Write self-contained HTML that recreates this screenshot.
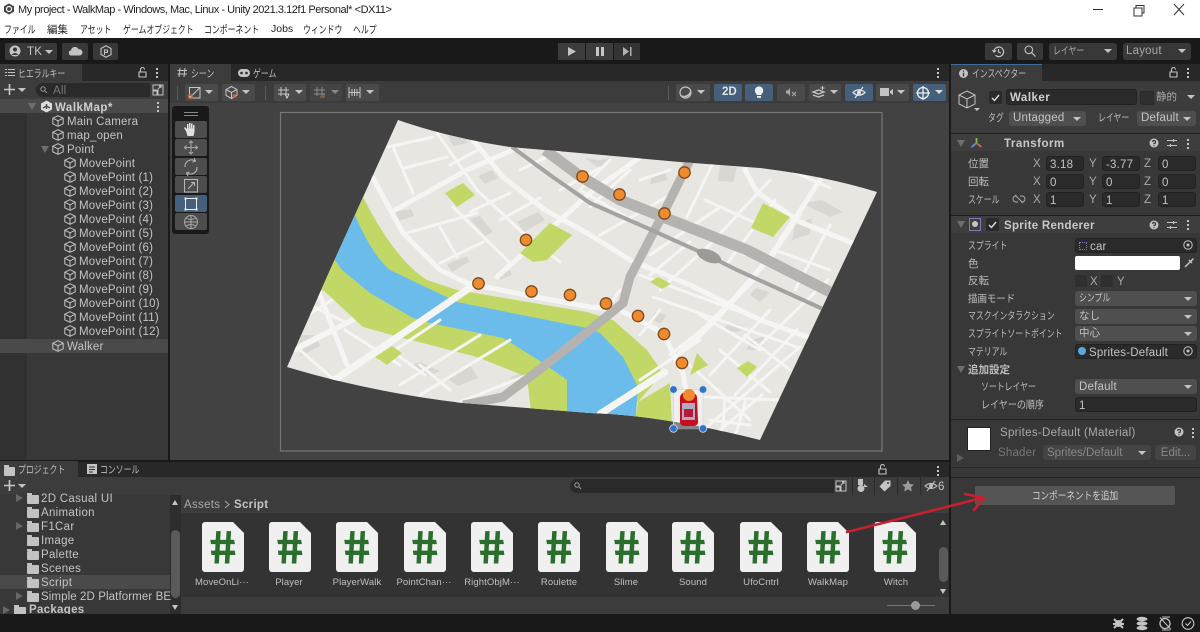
<!DOCTYPE html>
<html lang="ja"><head><meta charset="utf-8"><title>Unity</title>
<style>
html,body{margin:0;padding:0;width:1200px;height:632px;overflow:hidden;background:#191919}
body{position:relative;font-family:"Liberation Sans","Noto Sans CJK JP",sans-serif;font-size:11px;color:#c4c4c4}
.b{position:absolute}
.t{position:absolute;white-space:nowrap;height:14px;line-height:14px;font-size:11.5px;letter-spacing:.2px;margin-top:2px}
.j{font-size:10.5px;letter-spacing:0;color:#bdbdbd;transform:scaleX(.75);transform-origin:0 50%}
.k{font-size:10.5px;letter-spacing:0;color:#bdbdbd}
.m{font-size:10.5px;letter-spacing:0;color:#bdbdbd;transform:scaleX(.9);transform-origin:0 50%}
.menu{color:#222;margin-top:1px}
.btn{position:absolute;background:#4a4a4a;border-radius:2px}
.blue{background:#46607c}
.dd{position:absolute;background:#4f4f4f;border-radius:3px;height:15px;line-height:16px;padding-left:4px;box-sizing:border-box;color:#c4c4c4;white-space:nowrap;font-size:11.5px;letter-spacing:.2px}
.dd:after,.ar{content:"";position:absolute;right:5px;top:6px;width:0;height:0;border-left:4px solid transparent;border-right:4px solid transparent;border-top:4px solid #c4c4c4}
.ar{right:auto}
.sj{display:inline-block;font-size:10.5px;letter-spacing:0;transform:scaleX(.75);transform-origin:0 50%}
.f{position:absolute;background:#2a2a2a;border-radius:3px;height:15px;line-height:16px;padding-left:3px;box-sizing:border-box;color:#c4c4c4;font-size:11.5px;letter-spacing:.2px;white-space:nowrap;border:1px solid #222}
.tri{position:absolute;width:0;height:0;border-left:4px solid transparent;border-right:4px solid transparent;border-top:7px solid #6e6e6e}
.tr{position:absolute;width:0;height:0;border-top:4px solid transparent;border-bottom:4px solid transparent;border-left:7px solid #6e6e6e}
.cube{position:absolute;width:12px;height:12px}
.fold{position:absolute;width:12px;height:9px;background:#c2c2c2;border-radius:1px}
.fold:before{content:"";position:absolute;left:0;top:-2px;width:5px;height:2px;background:#c2c2c2}
.doc{position:absolute;top:522px;width:42px;height:50px;background:#f0f0f0;border-radius:3px;clip-path:polygon(0 0,31px 0,42px 11px,42px 50px,0 50px);color:#2b6e2d;font-family:"Liberation Sans",sans-serif;font-weight:bold;font-size:46px;line-height:50px;text-align:center}
.doc span{display:inline-block;transform:skewX(9deg);-webkit-text-stroke:1px #2b6e2d}
.lb{position:absolute;top:576px;width:70px;text-align:center;height:14px;line-height:14px;font-size:9.5px;color:#c0c0c0;letter-spacing:.1px;white-space:nowrap}
.dots{position:absolute;width:2px;height:2px;background:#c4c4c4;box-shadow:0 4px 0 #c4c4c4,0 8px 0 #c4c4c4}
.tool{position:absolute;left:175px;width:32px;height:17px;background:#4d4d4d;border-radius:2px}
svg{position:absolute;overflow:visible}
</style></head><body>
<svg width="0" height="0" style="position:absolute"><defs>
<symbol id="c" viewBox="0 0 12 12"><path d="M6 .7 11.2 3.2V8.8L6 11.3.8 8.8V3.2ZM.8 3.2 6 5.8 11.2 3.2M6 5.8V11.3" fill="none" stroke="#c4c4c4" stroke-width="1"/></symbol>
</defs></svg>

<!-- title bar -->
<div class="b" style="left:0;top:0;width:1200px;height:38px;background:#fff"></div>
<svg style="left:3px;top:3px" width="12" height="12" viewBox="0 0 12 12"><path d="M6 .5 11 3.2V8.8L6 11.5 1 8.8V3.2Z" fill="#444"/><circle cx="6" cy="6" r="2.5" fill="none" stroke="#fff" stroke-width="1.2"/></svg>
<div class="t" style="left:18px;top:2px;color:#222;font-size:11px;letter-spacing:-.45px;margin-top:1px">My project - WalkMap - Windows, Mac, Linux - Unity 2021.3.12f1 Personal* &lt;DX11&gt;</div>
<div class="t j menu" style="left:4px;top:22px">ファイル</div>
<div class="t k menu" style="left:47px;top:22px">編集</div>
<div class="t j menu" style="left:80px;top:22px">アセット</div>
<div class="t j menu" style="left:123px;top:22px">ゲームオブジェクト</div>
<div class="t j menu" style="left:204px;top:22px">コンポーネント</div>
<div class="t menu" style="left:271px;top:21px;font-size:10.5px;letter-spacing:0">Jobs</div>
<div class="t j menu" style="left:303px;top:22px">ウィンドウ</div>
<div class="t j menu" style="left:353px;top:22px">ヘルプ</div>
<svg style="left:1090px;top:3px" width="100" height="14" viewBox="0 0 100 14"><path d="M3 6.5H13" stroke="#333" stroke-width="1"/><path d="M44 5H52V13H44ZM46 5V2.5H54V10H52" fill="none" stroke="#333" stroke-width="1"/><path d="M84 1 94 12M94 1 84 12" stroke="#333" stroke-width="1"/></svg>

<!-- main toolbar -->
<div class="b" style="left:0;top:38px;width:1200px;height:26px;background:#191919"></div>
<div class="btn" style="left:5px;top:43px;width:52px;height:17px;background:#383838"></div>
<svg style="left:9px;top:45px" width="12" height="12" viewBox="0 0 12 12"><circle cx="6" cy="6" r="5.5" fill="#c4c4c4"/><circle cx="6" cy="4.5" r="2" fill="#383838"/><path d="M2.5 10Q6 6 9.5 10" fill="#383838"/></svg>
<div class="t" style="left:27px;top:43px">TK</div>
<div class="ar" style="left:45px;top:50px"></div>
<div class="btn" style="left:62px;top:43px;width:26px;height:17px;background:#383838"></div>
<svg style="left:68px;top:46px" width="15" height="10" viewBox="0 0 15 10"><path d="M3 9.5A2.7 2.7 0 0 1 3 4.2 4 4 0 0 1 10.5 3.2 3.2 3.2 0 0 1 12 9.5Z" fill="#c4c4c4"/></svg>
<div class="btn" style="left:93px;top:43px;width:25px;height:17px;background:#383838"></div>
<svg style="left:100px;top:45px" width="12" height="13" viewBox="0 0 12 13"><path d="M6 .8 11 3.5V9.5L6 12.2 1 9.5V3.5Z" fill="none" stroke="#c4c4c4" stroke-width="1.1"/><path d="M4.5 10V5H7.5V7.5H4.5" fill="none" stroke="#c4c4c4" stroke-width="1.1"/></svg>
<div class="b" style="left:558px;top:43px;width:27px;height:17px;background:#3c3c3c"></div>
<div class="b" style="left:586px;top:43px;width:27px;height:17px;background:#3c3c3c"></div>
<div class="b" style="left:614px;top:43px;width:26px;height:17px;background:#333"></div>
<svg style="left:558px;top:43px" width="82" height="17" viewBox="0 0 82 17"><path d="M10 4 18 8.5 10 13Z" fill="#c4c4c4"/><path d="M38 4H41V13H38ZM43 4H46V13H43Z" fill="#c4c4c4"/><path d="M65 4 71 8.5 65 13ZM72 4H73.5V13H72Z" fill="#b0b0b0"/></svg>
<div class="btn" style="left:985px;top:43px;width:27px;height:17px;background:#383838"></div>
<svg style="left:992px;top:45px" width="13" height="13" viewBox="0 0 13 13"><path d="M2 6.5A4.8 4.8 0 1 1 3.5 10.3M.5 5 2 7 4 5.5M6.5 4V7L9 8" fill="none" stroke="#c4c4c4" stroke-width="1.2"/></svg>
<div class="btn" style="left:1017px;top:43px;width:26px;height:17px;background:#383838"></div>
<svg style="left:1024px;top:45px" width="12" height="12" viewBox="0 0 12 12"><circle cx="4.8" cy="4.8" r="3.8" fill="none" stroke="#c4c4c4" stroke-width="1.1"/><path d="M7.6 7.6 11.5 11.5" stroke="#c4c4c4" stroke-width="1.2"/></svg>
<div class="dd" style="left:1049px;top:43px;width:68px;height:17px;line-height:17px;background:#383838;color:#a8a8a8"><span class="sj">レイヤー</span></div>
<div class="dd" style="left:1123px;top:43px;width:68px;height:17px;line-height:17px;background:#383838;color:#a8a8a8;padding-left:3px">Layout</div>

<!-- hierarchy -->
<div class="b" style="left:0;top:64px;width:168px;height:17px;background:#282828"></div>
<div class="b" style="left:0;top:64px;width:82px;height:17px;background:#3c3c3c"></div>
<div class="b" style="left:0;top:81px;width:168px;height:18px;background:#3c3c3c"></div>
<div class="b" style="left:0;top:99px;width:168px;height:361px;background:#383838"></div>
<div class="b" style="left:0;top:113px;width:27px;height:347px;background:#313131"></div>
<div class="b" style="left:0;top:99px;width:168px;height:14px;background:#4a4a4a"></div>
<div class="b" style="left:0;top:339px;width:168px;height:14px;background:#4a4a4a"></div>
<svg style="left:5px;top:69px" width="10" height="8" viewBox="0 0 10 8"><path d="M0 .5H2M3 .5H10M0 3.5H2M3 3.5H10M0 6.5H2M3 6.5H10" stroke="#c4c4c4"/></svg>
<div class="t j" style="left:18px;top:65px">ヒエラルキー</div>
<svg style="left:138px;top:67px" width="9" height="11" viewBox="0 0 9 11"><path d="M2.5 4.5V2.5A2 2 0 0 1 6.5 2.5M1 5H8V10H1Z" fill="none" stroke="#c4c4c4" stroke-width="1.1"/></svg>
<div class="dots" style="left:156px;top:68px"></div>
<svg style="left:4px;top:84px" width="11" height="11" viewBox="0 0 11 11"><path d="M5.5 0V11M0 5.5H11" stroke="#c8c8c8" stroke-width="1.6"/></svg>
<div class="ar" style="left:18px;top:88px"></div>
<div class="b" style="left:36px;top:83px;width:114px;height:14px;background:#2a2a2a;border-radius:7px 2px 2px 7px"></div>
<svg style="left:40px;top:86px" width="9" height="8" viewBox="0 0 9 8"><circle cx="3" cy="3" r="2.2" fill="none" stroke="#999"/><path d="M5 5 7 7" stroke="#999"/></svg>
<div class="t" style="left:53px;top:82px;color:#777">All</div>
<svg style="left:152px;top:84px" width="12" height="12" viewBox="0 0 12 12"><path d="M1 1H11V11H6V6H1Z" fill="none" stroke="#c4c4c4"/><path d="M1 7H5V11H1ZM6 5 9 2M7 2H9V4" fill="none" stroke="#c4c4c4"/></svg>
<div class="tri" style="left:28px;top:103px"></div>
<svg style="left:40px;top:100px" width="13" height="13" viewBox="0 0 13 13"><path d="M6.5.5 12 3.5V9.5L6.5 12.5 1 9.5V3.5Z" fill="#dcdcdc"/><path d="M6.5 4V9M3 8 6.5 6 10 8" stroke="#4a4a4a" stroke-width="1.4" fill="none"/></svg>
<div class="t" style="left:55px;top:99px;font-weight:bold;color:#cfcfcf;letter-spacing:.5px">WalkMap*</div>
<div class="dots" style="left:157px;top:102px"></div>
<svg class="cube" style="left:52px;top:115px"><use href="#c"/></svg><div class="t" style="left:67px;top:113px">Main Camera</div>
<svg class="cube" style="left:52px;top:129px"><use href="#c"/></svg><div class="t" style="left:67px;top:127px">map_open</div>
<div class="tri" style="left:41px;top:146px"></div>
<svg class="cube" style="left:52px;top:143px"><use href="#c"/></svg><div class="t" style="left:67px;top:141px">Point</div>
<svg class="cube" style="left:64px;top:157px"><use href="#c"/></svg><div class="t" style="left:79px;top:155px">MovePoint</div>
<svg class="cube" style="left:64px;top:171px"><use href="#c"/></svg><div class="t" style="left:79px;top:169px">MovePoint (1)</div>
<svg class="cube" style="left:64px;top:185px"><use href="#c"/></svg><div class="t" style="left:79px;top:183px">MovePoint (2)</div>
<svg class="cube" style="left:64px;top:199px"><use href="#c"/></svg><div class="t" style="left:79px;top:197px">MovePoint (3)</div>
<svg class="cube" style="left:64px;top:213px"><use href="#c"/></svg><div class="t" style="left:79px;top:211px">MovePoint (4)</div>
<svg class="cube" style="left:64px;top:227px"><use href="#c"/></svg><div class="t" style="left:79px;top:225px">MovePoint (5)</div>
<svg class="cube" style="left:64px;top:241px"><use href="#c"/></svg><div class="t" style="left:79px;top:239px">MovePoint (6)</div>
<svg class="cube" style="left:64px;top:255px"><use href="#c"/></svg><div class="t" style="left:79px;top:253px">MovePoint (7)</div>
<svg class="cube" style="left:64px;top:269px"><use href="#c"/></svg><div class="t" style="left:79px;top:267px">MovePoint (8)</div>
<svg class="cube" style="left:64px;top:283px"><use href="#c"/></svg><div class="t" style="left:79px;top:281px">MovePoint (9)</div>
<svg class="cube" style="left:64px;top:297px"><use href="#c"/></svg><div class="t" style="left:79px;top:295px">MovePoint (10)</div>
<svg class="cube" style="left:64px;top:311px"><use href="#c"/></svg><div class="t" style="left:79px;top:309px">MovePoint (11)</div>
<svg class="cube" style="left:64px;top:325px"><use href="#c"/></svg><div class="t" style="left:79px;top:323px">MovePoint (12)</div>
<svg class="cube" style="left:52px;top:340px"><use href="#c"/></svg><div class="t" style="left:67px;top:338px">Walker</div>

<!-- scene -->
<div class="b" style="left:170px;top:64px;width:779px;height:17px;background:#282828"></div>
<div class="b" style="left:170px;top:64px;width:61px;height:17px;background:#3c3c3c"></div>
<div class="b" style="left:170px;top:81px;width:779px;height:22px;background:#3c3c3c"></div>
<div class="b" style="left:170px;top:103px;width:779px;height:357px;background:#424242"></div>
<svg style="left:177px;top:67px" width="11" height="11" viewBox="0 0 11 11"><path d="M3 1 2 10M8 1 7 10M.5 3.5H10M.5 7H10" stroke="#c4c4c4"/></svg>
<div class="t j" style="left:191px;top:65px">シーン</div>
<svg style="left:238px;top:69px" width="12" height="8" viewBox="0 0 12 8"><rect width="12" height="8" rx="4" fill="#c4c4c4"/><circle cx="3.5" cy="4" r="1.3" fill="#282828"/><circle cx="8.5" cy="4" r="1.3" fill="#282828"/></svg>
<div class="t j" style="left:253px;top:65px">ゲーム</div>
<div class="dots" style="left:937px;top:68px"></div>
<div class="b" style="left:177px;top:86px;width:1px;height:14px;background:#5a5a5a"></div>
<div class="btn" style="left:185px;top:84px;width:33px;height:17px"></div>
<svg style="left:188px;top:86px" width="13" height="13" viewBox="0 0 13 13"><path d="M1.5 1.5H12V12H1.5ZM1.5 12 12 1.5" fill="none" stroke="#c4c4c4"/><circle cx="2.5" cy="10.5" r="2" fill="none" stroke="#d0623c" stroke-width="1.2"/></svg>
<div class="ar" style="left:205px;top:90px"></div>
<div class="btn" style="left:222px;top:84px;width:33px;height:17px"></div>
<svg style="left:225px;top:86px" width="13" height="13" viewBox="0 0 13 13"><path d="M6.5 .5 12 3.5V9.5L6.5 12.5 1 9.5V3.5ZM1 3.5 6.5 6.5 12 3.5M6.5 6.5V12.5" fill="none" stroke="#c4c4c4"/><circle cx="9.5" cy="10" r="2" fill="#d0623c"/></svg>
<div class="ar" style="left:242px;top:90px"></div>
<div class="b" style="left:265px;top:86px;width:1px;height:14px;background:#5a5a5a"></div>
<div class="btn" style="left:274px;top:84px;width:32px;height:17px"></div>
<svg style="left:277px;top:86px" width="13" height="13" viewBox="0 0 13 13"><path d="M4 1V10M9 1V10M1 4H12M1 8H12" stroke="#c4c4c4"/><path d="M8 8 10 12 12 8" fill="none" stroke="#d0d0d0"/></svg>
<div class="ar" style="left:295px;top:90px"></div>
<div class="btn" style="left:310px;top:84px;width:32px;height:17px;background:#444"></div>
<svg style="left:313px;top:86px" width="13" height="13" viewBox="0 0 13 13"><path d="M4 1V10M9 1V10M1 4H12M1 8H12" stroke="#8a8a8a"/><path d="M7 11H11V7" fill="none" stroke="#c2693f"/></svg>
<div class="ar" style="left:331px;top:90px;border-top-color:#888"></div>
<div class="btn" style="left:346px;top:84px;width:33px;height:17px"></div>
<svg style="left:348px;top:86px" width="13" height="13" viewBox="0 0 13 13"><path d="M1 1V12M12 1V12M1 6.500H12M4 3V10M6.500 3V10M9 3V10" stroke="#c4c4c4"/></svg>
<div class="ar" style="left:366px;top:90px"></div>
<div class="b" style="left:668px;top:86px;width:1px;height:14px;background:#5a5a5a"></div>
<div class="btn" style="left:676px;top:84px;width:34px;height:17px"></div>
<svg style="left:679px;top:86px" width="13" height="13" viewBox="0 0 13 13"><circle cx="6.500" cy="6.500" r="5.500" fill="none" stroke="#c4c4c4" stroke-width="1.2"/><path d="M1.500 8.500A6 6 0 0 0 11 2.500 5 5 0 0 1 1.500 8.500Z" fill="#c4c4c4"/></svg>
<div class="ar" style="left:697px;top:90px"></div>
<div class="btn blue" style="left:714px;top:84px;width:28px;height:17px"></div>
<div class="t" style="left:722px;top:85px;font-weight:bold;color:#e4e4e4;letter-spacing:0;margin-top:0">2D</div>
<div class="btn blue" style="left:745px;top:84px;width:28px;height:17px"></div>
<svg style="left:754px;top:85px" width="10" height="14" viewBox="0 0 10 14"><path d="M2.500 9A4.200 4.200 0 1 1 7.500 9V10H2.500Z" fill="#eee"/><rect x="3" y="11" width="4" height="1.800" fill="#eee"/></svg>
<div class="btn" style="left:777px;top:84px;width:28px;height:17px"></div>
<svg style="left:785px;top:87px" width="12" height="11" viewBox="0 0 12 11"><path d="M1 3.500H3L5 1V9L3 6.500H1Z" fill="#aaa"/><path d="M7 5 11 9M11 5 7 9" stroke="#aaa"/></svg>
<div class="btn" style="left:809px;top:84px;width:32px;height:17px"></div>
<svg style="left:812px;top:86px" width="14" height="13" viewBox="0 0 14 13"><path d="M1 6 6.500 4 12 6 6.500 8ZM1 9 6.500 11 12 9" fill="none" stroke="#c4c4c4" stroke-width="1.300"/><path d="M10.500 0V4M8.500 2H12.500" stroke="#c4c4c4"/></svg>
<div class="ar" style="left:830px;top:90px"></div>
<div class="btn blue" style="left:845px;top:84px;width:28px;height:17px"></div>
<svg style="left:852px;top:86px" width="14" height="13" viewBox="0 0 14 13"><path d="M1 6.500Q7 1 13 6.500 7 12 1 6.500Z" fill="none" stroke="#e4e4e4" stroke-width="1.200"/><circle cx="7" cy="6.500" r="2" fill="#e4e4e4"/><path d="M3 12 11 1" stroke="#e4e4e4" stroke-width="1.200"/></svg>
<div class="btn" style="left:876px;top:84px;width:33px;height:17px"></div>
<svg style="left:880px;top:87px" width="14" height="10" viewBox="0 0 14 10"><rect y="1" width="9" height="8" fill="#c4c4c4"/><path d="M10 4 13 2V8L10 6Z" fill="#c4c4c4"/></svg>
<div class="ar" style="left:897px;top:90px"></div>
<div class="btn blue" style="left:913px;top:84px;width:33px;height:17px"></div>
<svg style="left:916px;top:86px" width="14" height="14" viewBox="0 0 14 14"><circle cx="7" cy="7" r="5.500" fill="none" stroke="#eee" stroke-width="1.300"/><path d="M7 0V14M0 7H14" stroke="#eee" stroke-width="1.300"/></svg>
<div class="ar" style="left:935px;top:90px;border-top-color:#ddd"></div>

<!-- map -->
<svg style="left:0;top:0" width="1200" height="632" viewBox="0 0 1200 632">
<rect x="280.500" y="112.500" width="601.500" height="338.500" fill="none" stroke="#777" stroke-width="1.200"/>
<defs><clipPath id="m"><path d="M398 120 Q450 138 510 147 L580 153 680 162 760 168 Q825 176 877 192 L840 270 760 440 Q660 415 590 413 L463 403 Q370 392 287 367 L330 270Z"/></clipPath></defs>
<g clip-path="url(#m)">
<rect x="270" y="110" width="620" height="340" fill="#e8e6e1"/>
<g fill="#d9d7d2">
<path d="M448 136 462 134 468 143 453 146ZM478 176 492 170 498 178 485 184ZM395 212 411 209 414 216 399 221ZM470 219 480 216 493 232 485 236ZM517 222 538 212 545 220 524 232ZM447 264 467 256 469 262 452 272ZM498 275 510 270 512 275 500 280Z"/>
<path d="M585 158 600 160 610 158 599 168ZM652 176 664 170 668 180 650 184ZM720 165 737 167 733 182 718 181ZM802 203 822 200 843 212 830 217ZM795 225 812 218 810 234 792 240Z"/>
<path d="M655 312 667 315 661 323 650 320ZM730 322 745 326 738 332 722 330ZM752 340 765 336 762 350 746 350ZM756 288 770 292 760 302 750 295ZM295 335 315 335 320 346 301 356ZM420 362 440 371 430 376 412 365ZM446 378 470 365 478 378 458 386ZM510 377 528 371 530 385 512 382Z"/>
</g>
<g fill="none" stroke="#f5f5f3" stroke-width="5" stroke-linecap="round" stroke-linejoin="round">
<path d="M373 178 403 233 440 270 467 283 530 296 590 307 620 310 663 333 683 373 687 395 690 432"/>
<path d="M395 210 467 170 513 150"/>
<path d="M473 140 503 177 545 210 587 233 630 260 690 285 760 320 830 345"/>
<path d="M497 277 590 193 650 150"/>
<path d="M753 280 680 353"/>
<path d="M820 180 770 257 720 315 690 345"/>
<path d="M318 290 347 365"/>
<path d="M295 350 360 316 420 290"/>
<path d="M745 170 757 192 800 222 870 250"/>
</g>
<path d="M363 197 Q395 260 427 280 L457 290 587 312 613 320 647 350 663 373 637 403 635 420 567 420 532 420 527 377 477 357 403 338 363 327 323 290 300 290 340 200Z" fill="#c2d866"/>
<path d="M638 402 670 383 672 425 635 420Z" fill="#c2d866"/>
<path d="M355 215 Q372 255 390 270 L457 302 587 328 600 333 623 357 638 387 635 425 567 425 567 380 543 363 503 338 430 323 413 318 370 293 342 270 335 260 320 240Z" fill="#6bbcea"/>
<g fill="none" stroke="#f5f5f3" stroke-linecap="round">
<path d="M474 285 330 383" stroke-width="7"/>
<path d="M665 372 600 414" stroke-width="7"/>
<g stroke-width="3">
<path d="M388 147 433 137M393 147 413 193M405 168 447 157M437 133 477 190 523 233 560 262M407 233 477 213M440 263 483 242M453 207 510 263M440 227 457 257M470 212 510 193M500 220 540 198M520 170 560 150M450 165 478 150"/>
<path d="M580 190 640 225M610 160 580 190M630 170 590 207M560 190 600 168M640 180 670 170M687 217 713 163M665 205 650 240M600 235 670 195M650 255 720 207M690 242 650 275M700 255 770 180M726 265 775 200M790 170 830 188M775 250 830 270M705 200 760 225M800 215 770 260M830 225 795 290M660 290 720 235M640 275 830 345M715 240 745 255"/>
<path d="M653 297 797 347M620 290 600 320M660 310 640 335M700 340 640 380M705 327 670 355M740 295 700 335M770 310 710 375M797 330 735 395M828 280 760 345M800 347 707 427M762 395 720 430M703 397 780 400M720 350 770 392M745 335 790 370M700 315 760 350M690 365 750 420M725 400 722 435M745 402 735 437M710 420 750 425"/>
<path d="M540 370 440 410M510 340 420 395M480 335 400 385M440 320 380 360M420 365 450 390M390 350 425 375M345 330 400 365M330 330 300 345M310 305 345 322M332 300 300 320M300 350 340 385"/>
</g>
</g>
<g fill="none" stroke="#b4b3b0" stroke-linecap="butt">
<path d="M690 160 660 220 630 277 623 303 590 330 543 367 503 397 463 405" stroke-width="9"/>
<path d="M545 150 580 176 620 200 663 217 747 250 832 293" stroke-width="11"/>
</g>
<path d="M512 147 550 175 590 203 647 228 707 255 737 270 825 310" fill="none" stroke="#a4a3a0" stroke-width="4"/>
<ellipse cx="709" cy="256" rx="13" ry="6" fill="#9c9b98" transform="rotate(22 709 256)"/>
<g fill="#c2d866">
<path d="M445 193 463 183 475 195 457 207ZM520 253 550 223 572 235 547 260 533 262ZM763 203 790 217 773 237 751 228ZM650 282 658 277 671 284 662 289ZM690 375 697 353 708 365ZM737 368 748 361 757 367 747 377ZM375 357 392 346 402 353 387 365Z"/>
</g>
</g>
<g fill="#ef8a2f" stroke="#7d4a1c" stroke-width="1.300">
<circle cx="684.500" cy="172.500" r="5.700"/><circle cx="582.500" cy="176.500" r="5.700"/><circle cx="619.500" cy="194.500" r="5.700"/><circle cx="664.500" cy="213.500" r="5.700"/><circle cx="526" cy="240" r="5.700"/><circle cx="478.500" cy="283.500" r="5.700"/><circle cx="531.500" cy="291.500" r="5.700"/><circle cx="570" cy="295" r="5.700"/><circle cx="606" cy="303.500" r="5.700"/><circle cx="638" cy="316" r="5.700"/><circle cx="664" cy="334" r="5.700"/><circle cx="682" cy="363" r="5.700"/>
</g>
<rect x="673.500" y="389.500" width="29.500" height="39" fill="#ffffff" fill-opacity=".35" stroke="#ddd" stroke-width="1"/>
<path d="M680 397Q681 392 688 392 696 392 697 397L698 422Q698 426 692 426H685Q680 426 680 422Z" fill="#c40f22"/>
<rect x="682" y="403" width="13" height="17" fill="#b5a9c0"/>
<rect x="684" y="409" width="9" height="8" fill="#b01c3a"/>
<circle cx="689" cy="395" r="6" fill="#ef8a2f"/>
<path d="M673.500 428.500H703" stroke="#888" stroke-width="1.500"/>
<g fill="#2f74c6" stroke="#cfe0f2" stroke-width=".8"><circle cx="673.500" cy="389.500" r="3.800"/><circle cx="703" cy="389.500" r="3.800"/><circle cx="673.500" cy="428.500" r="3.800"/><circle cx="703" cy="428.500" r="3.800"/></g>
</svg>

<!-- tool overlay -->
<div class="b" style="left:172px;top:106px;width:37px;height:128px;background:#191919;border-radius:3px"></div>
<div class="b" style="left:184px;top:112px;width:14px;height:1px;background:#888;box-shadow:0 3px 0 #888"></div>
<div class="tool" style="top:121px"></div>
<div class="tool" style="top:139px"></div>
<div class="tool" style="top:158px"></div>
<div class="tool" style="top:176px"></div>
<div class="tool" style="top:195px;background:#46607c"></div>
<div class="tool" style="top:213px"></div>
<svg style="left:175px;top:121px" width="32" height="110" viewBox="0 0 32 110">
<path d="M11 10 9 7 10 6 12 8V3H13.500V7.500H14V2H15.500V7.500H16V2.500H17.500V7.500H18V4H19.500V11L18.500 15H12.500Z" fill="#e0e0e0"/>
<path d="M16 20V33M9.500 26.500H22.500M14 22 16 20 18 22M14 31 16 33 18 31M11.500 24.500 9.500 26.500 11.500 28.500M20.500 24.500 22.500 26.500 20.500 28.500" fill="none" stroke="#a8a8a8"/>
<path d="M10 46A6.500 6.500 0 0 1 20 40M22 46A6.500 6.500 0 0 1 12 52M19 37 20.500 40 17.500 41M13 55 11.500 52 14.500 51" fill="none" stroke="#b0b0b0" stroke-width="1.100"/>
<path d="M9.500 58.500H22.500V71H9.500ZM13 68 19 61.500M16 61.500H19.500V65" fill="none" stroke="#b8b8b8"/>
<path d="M10.500 77.500H21.500V88.500H10.500Z" fill="none" stroke="#eee"/>
<path d="M9.500 76.500h2v2h-2zM20.500 76.500h2v2h-2zM9.500 87.500h2v2h-2zM20.500 87.500h2v2h-2z" fill="#eee"/>
<circle cx="16" cy="101" r="6.500" fill="none" stroke="#a8a8a8"/><path d="M9.500 101H22.500M16 94.500V107.500M11 97Q16 100 21 97M11 105Q16 102 21 105" fill="none" stroke="#a8a8a8"/>
</svg>

<!-- inspector -->
<div class="b" style="left:949px;top:64px;width:2px;height:550px;background:#191919"></div>
<div class="b" style="left:951px;top:64px;width:249px;height:550px;background:#383838"></div>
<div class="b" style="left:951px;top:64px;width:249px;height:17px;background:#282828"></div>
<div class="b" style="left:951px;top:64px;width:91px;height:17px;background:#3c3c3c;border-top:1px solid #3a6d99;box-sizing:border-box"></div>
<div class="b" style="left:951px;top:81px;width:249px;height:52px;background:#3c3c3c"></div>
<svg style="left:959px;top:69px" width="9" height="9" viewBox="0 0 9 9"><circle cx="4.500" cy="4.500" r="4.500" fill="#c4c4c4"/><path d="M4.500 1.500V2.800M4.500 3.800V7.500" stroke="#333" stroke-width="1.300"/></svg>
<div class="t j" style="left:972px;top:65px">インスペクター</div>
<svg style="left:1169px;top:67px" width="9" height="11" viewBox="0 0 9 11"><path d="M2.500 4.500V2.500A2 2 0 0 1 6.500 2.500M1 5H8V10H1Z" fill="none" stroke="#c4c4c4" stroke-width="1.100"/></svg>
<div class="dots" style="left:1187px;top:68px"></div>
<svg style="left:958px;top:90px" width="18" height="19" viewBox="0 0 18 19"><path d="M9 1 17 5V14L9 18 1 14V5ZM1 5 9 9 17 5M9 9V18" fill="none" stroke="#c4c4c4" stroke-width="1"/></svg>
<div class="ar" style="left:974px;top:108px;border-left-width:3px;border-right-width:3px;border-top-width:3px"></div>
<div class="b" style="left:989px;top:91px;width:13px;height:13px;background:#2a2a2a;border-radius:2px"></div>
<svg style="left:989px;top:91px" width="13" height="13" viewBox="0 0 13 13"><path d="M3 7 5.500 9.500 10 4" fill="none" stroke="#ddd" stroke-width="1.400"/></svg>
<div class="f" style="left:1006px;top:89px;width:131px;height:16px;font-weight:bold;color:#d0d0d0;letter-spacing:.5px">Walker</div>
<div class="b" style="left:1140px;top:91px;width:12px;height:12px;background:#2f2f2f;border-radius:2px;border:1px solid #2a2a2a"></div>
<div class="t k" style="left:1156px;top:88px;color:#aaa">静的</div>
<div class="ar" style="left:1187px;top:95px"></div>
<div class="t j" style="left:988px;top:109px">タグ</div>
<div class="dd" style="left:1009px;top:111px;width:77px;line-height:15px">Untagged</div>
<div class="t j" style="left:1098px;top:109px">レイヤー</div>
<div class="dd" style="left:1137px;top:111px;width:59px;line-height:15px">Default</div>
<div class="b" style="left:951px;top:133px;width:249px;height:1px;background:#1f1f1f"></div>
<div class="b" style="left:951px;top:134px;width:249px;height:17px;background:#3e3e3e"></div>
<div class="tri" style="left:957px;top:140px"></div>
<svg style="left:970px;top:137px" width="13" height="12" viewBox="0 0 13 12"><path d="M6.500 6V1" stroke="#7fc24c" stroke-width="1.800"/><path d="M6.500 6 1.500 10" stroke="#5a8fd0" stroke-width="1.800"/><path d="M6.500 6 11.500 10" stroke="#d0623c" stroke-width="1.800"/></svg>
<div class="t" style="left:1004px;top:135px;font-weight:bold;letter-spacing:.5px;color:#c8c8c8">Transform</div>
<svg style="left:1149px;top:138px" width="10" height="10" viewBox="0 0 10 10"><circle cx="5" cy="5" r="4.500" fill="#c4c4c4"/><path d="M3.500 3.800A1.500 1.500 0 1 1 5 5.500V6.300M5 7.200V8.300" fill="none" stroke="#383838" stroke-width="1.200"/></svg>
<svg style="left:1167px;top:138px" width="10" height="10" viewBox="0 0 10 10"><path d="M0 2.500H10M0 7.500H10M6.500 1V4M3.500 6V9" stroke="#c4c4c4" stroke-width="1.100"/></svg>
<div class="dots" style="left:1187px;top:139px"></div>
<div class="t k" style="left:968px;top:155px">位置</div>
<div class="t k" style="left:968px;top:173px">回転</div>
<div class="t j" style="left:968px;top:191px">スケール</div>
<svg style="left:1013px;top:195px" width="12" height="8" viewBox="0 0 12 8"><path d="M4 1H3A3 3 0 0 0 3 7H5M7 1H9A3 3 0 0 1 9 7H8M2 0 10 8" fill="none" stroke="#aaa"/></svg>
<div class="t" style="left:1033px;top:155px;color:#aaa">X</div><div class="f" style="left:1046px;top:156px;width:38px">3.18</div>
<div class="t" style="left:1089px;top:155px;color:#aaa">Y</div><div class="f" style="left:1102px;top:156px;width:38px">-3.77</div>
<div class="t" style="left:1144px;top:155px;color:#aaa">Z</div><div class="f" style="left:1158px;top:156px;width:38px">0</div>
<div class="t" style="left:1033px;top:173px;color:#aaa">X</div><div class="f" style="left:1046px;top:174px;width:38px">0</div>
<div class="t" style="left:1089px;top:173px;color:#aaa">Y</div><div class="f" style="left:1102px;top:174px;width:38px">0</div>
<div class="t" style="left:1144px;top:173px;color:#aaa">Z</div><div class="f" style="left:1158px;top:174px;width:38px">0</div>
<div class="t" style="left:1033px;top:191px;color:#aaa">X</div><div class="f" style="left:1046px;top:192px;width:38px">1</div>
<div class="t" style="left:1089px;top:191px;color:#aaa">Y</div><div class="f" style="left:1102px;top:192px;width:38px">1</div>
<div class="t" style="left:1144px;top:191px;color:#aaa">Z</div><div class="f" style="left:1158px;top:192px;width:38px">1</div>
<div class="b" style="left:951px;top:215px;width:249px;height:1px;background:#1f1f1f"></div>
<div class="b" style="left:951px;top:216px;width:249px;height:17px;background:#3e3e3e"></div>
<div class="tri" style="left:957px;top:221px"></div>
<svg style="left:969px;top:218px" width="12" height="13" viewBox="0 0 12 13"><rect x=".5" y=".5" width="11" height="12" fill="none" stroke="#8877bb"/><circle cx="6" cy="6" r="3" fill="#c4c4c4"/></svg>
<div class="b" style="left:986px;top:218px;width:13px;height:13px;background:#2a2a2a;border-radius:2px"></div>
<svg style="left:986px;top:218px" width="13" height="13" viewBox="0 0 13 13"><path d="M3 7 5.500 9.500 10 4" fill="none" stroke="#ddd" stroke-width="1.400"/></svg>
<div class="t" style="left:1004px;top:217px;font-weight:bold;letter-spacing:.3px;color:#c8c8c8">Sprite Renderer</div>
<svg style="left:1149px;top:220px" width="10" height="10" viewBox="0 0 10 10"><circle cx="5" cy="5" r="4.500" fill="#c4c4c4"/><path d="M3.500 3.800A1.500 1.500 0 1 1 5 5.500V6.300M5 7.200V8.300" fill="none" stroke="#383838" stroke-width="1.200"/></svg>
<svg style="left:1167px;top:220px" width="10" height="10" viewBox="0 0 10 10"><path d="M0 2.500H10M0 7.500H10M6.500 1V4M3.500 6V9" stroke="#c4c4c4" stroke-width="1.100"/></svg>
<div class="dots" style="left:1187px;top:220px"></div>
<div class="t j" style="left:968px;top:237px">スプライト</div>
<div class="t k" style="left:968px;top:255px">色</div>
<div class="t k" style="left:968px;top:272px">反転</div>
<div class="t m" style="left:968px;top:290px">描画モード</div>
<div class="t j" style="left:968px;top:307px">マスクインタラクション</div>
<div class="t j" style="left:968px;top:325px">スプライトソートポイント</div>
<div class="t j" style="left:968px;top:343px">マテリアル</div>
<div class="tri" style="left:957px;top:366px"></div>
<div class="t k" style="left:968px;top:361px;font-weight:bold">追加設定</div>
<div class="t j" style="left:981px;top:378px">ソートレイヤー</div>
<div class="t m" style="left:981px;top:396px;transform:scaleX(.86)">レイヤーの順序</div>
<div class="f" style="left:1075px;top:238px;width:122px;padding-left:14px">car</div>
<div class="b" style="left:1079px;top:242px;width:6px;height:6px;border:1px dotted #8877bb"></div>
<svg style="left:1183px;top:240px" width="10" height="10" viewBox="0 0 10 10"><circle cx="5" cy="5" r="4.200" fill="none" stroke="#c4c4c4"/><circle cx="5" cy="5" r="1.500" fill="#c4c4c4"/></svg>
<div class="b" style="left:1075px;top:256px;width:105px;height:14px;background:#fff;border-radius:2px"></div>
<svg style="left:1184px;top:257px" width="11" height="11" viewBox="0 0 11 11"><path d="M1 10 6 5M5 3 8 6M7 4 9.500 1.500" stroke="#c4c4c4" stroke-width="1.500"/></svg>
<div class="b" style="left:1075px;top:275px;width:12px;height:12px;background:#2f2f2f;border-radius:2px"></div>
<div class="t" style="left:1090px;top:273px;color:#aaa">X</div>
<div class="b" style="left:1101px;top:275px;width:12px;height:12px;background:#2f2f2f;border-radius:2px"></div>
<div class="t" style="left:1117px;top:273px;color:#aaa">Y</div>
<div class="dd" style="left:1075px;top:291px;width:122px;line-height:15px"><span class="sj">シンプル</span></div>
<div class="dd" style="left:1075px;top:309px;width:122px;font-size:10.5px;letter-spacing:0;line-height:15px">なし</div>
<div class="dd" style="left:1075px;top:326px;width:122px;font-size:10.5px;letter-spacing:0;line-height:15px">中心</div>
<div class="f" style="left:1075px;top:344px;width:122px;padding-left:13px">Sprites-Default</div>
<div class="b" style="left:1078px;top:347px;width:8px;height:8px;border-radius:50%;background:#5aa8dc"></div>
<svg style="left:1183px;top:346px" width="10" height="10" viewBox="0 0 10 10"><circle cx="5" cy="5" r="4.200" fill="none" stroke="#c4c4c4"/><circle cx="5" cy="5" r="1.500" fill="#c4c4c4"/></svg>
<div class="dd" style="left:1075px;top:379px;width:122px">Default</div>
<div class="f" style="left:1075px;top:397px;width:122px">1</div>
<div class="b" style="left:951px;top:419px;width:249px;height:1px;background:#222"></div>
<div class="b" style="left:968px;top:428px;width:22px;height:22px;background:#fff;outline:1px solid #222"></div>
<div class="t" style="left:1000px;top:424px;color:#aaa;letter-spacing:.3px">Sprites-Default (Material)</div>
<svg style="left:1174px;top:427px" width="10" height="10" viewBox="0 0 10 10"><circle cx="5" cy="5" r="4.500" fill="#c4c4c4"/><path d="M3.500 3.800A1.500 1.500 0 1 1 5 5.500V6.300M5 7.200V8.300" fill="none" stroke="#383838" stroke-width="1.200"/></svg>
<div class="dots" style="left:1192px;top:428px"></div>
<div class="tr" style="left:957px;top:454px;border-left-color:#5e5e5e"></div>
<div class="t" style="left:998px;top:444px;color:#777">Shader</div>
<div class="dd" style="left:1043px;top:445px;width:108px;color:#888;background:#444;letter-spacing:0">Sprites/Default</div>
<div class="b" style="left:1155px;top:445px;width:41px;height:15px;line-height:16px;text-align:center;color:#888;background:#444;border-radius:3px;font-size:11.5px">Edit...</div>
<div class="b" style="left:951px;top:467px;width:249px;height:1px;background:#2a2a2a"></div>
<div class="b" style="left:951px;top:477px;width:249px;height:1px;background:#222"></div>
<div class="btn" style="left:975px;top:486px;width:200px;height:19px;background:#555"></div>
<div class="t m" style="left:975px;top:487px;width:200px;text-align:center;color:#cfcfcf;transform:scaleX(.82);transform-origin:50% 50%">コンポーネントを追加</div>

<!-- project -->
<div class="b" style="left:0;top:460px;width:949px;height:2px;background:#191919"></div>
<div class="b" style="left:0;top:462px;width:949px;height:15px;background:#282828"></div>
<div class="b" style="left:0;top:461px;width:78px;height:16px;background:#3c3c3c"></div>
<div class="b" style="left:0;top:477px;width:949px;height:18px;background:#3c3c3c"></div>
<div class="b" style="left:0;top:495px;width:170px;height:119px;background:#383838"></div>
<div class="b" style="left:170px;top:495px;width:11px;height:119px;background:#2d2d2d"></div>
<div class="b" style="left:181px;top:495px;width:768px;height:18px;background:#3c3c3c"></div>
<div class="b" style="left:181px;top:513px;width:768px;height:84px;background:#333"></div>
<div class="b" style="left:181px;top:597px;width:768px;height:17px;background:#3c3c3c"></div>
<div class="fold" style="left:4px;top:467px;width:11px"></div>
<div class="t j" style="left:18px;top:461px">プロジェクト</div>
<svg style="left:87px;top:464px" width="11" height="10" viewBox="0 0 11 10"><rect width="10" height="10" fill="#c4c4c4"/><path d="M2 3H8M2 5.500H8M2 8H6" stroke="#333"/></svg>
<div class="t j" style="left:100px;top:461px">コンソール</div>
<svg style="left:878px;top:464px" width="9" height="11" viewBox="0 0 9 11"><path d="M2.500 4.500V2.500A2 2 0 0 1 6.500 2.500M1 5H8V10H1Z" fill="none" stroke="#c4c4c4" stroke-width="1.100"/></svg>
<div class="dots" style="left:937px;top:466px"></div>
<svg style="left:4px;top:480px" width="11" height="11" viewBox="0 0 11 11"><path d="M5.500 0V11M0 5.500H11" stroke="#c8c8c8" stroke-width="1.600"/></svg>
<div class="ar" style="left:18px;top:484px"></div>
<div class="b" style="left:570px;top:479px;width:264px;height:14px;background:#2a2a2a;border-radius:7px 2px 2px 7px"></div>
<svg style="left:574px;top:482px" width="9" height="8" viewBox="0 0 9 8"><circle cx="3" cy="3" r="2.200" fill="none" stroke="#999"/><path d="M5 5 7 7" stroke="#999"/></svg>
<svg style="left:835px;top:480px" width="12" height="12" viewBox="0 0 12 12"><path d="M1 1H11V11H6V6H1Z" fill="none" stroke="#c4c4c4"/><path d="M1 7H5V11H1ZM6 5 9 2M7 2H9V4" fill="none" stroke="#c4c4c4"/></svg>
<div class="b" style="left:852px;top:477px;width:1px;height:18px;background:#2a2a2a;box-shadow:22px 0 0 #2a2a2a,45px 0 0 #2a2a2a,68px 0 0 #2a2a2a"></div>
<svg style="left:857px;top:479px" width="12" height="13" viewBox="0 0 12 13"><rect x="1" y="0" width="5" height="6" fill="#c4c4c4"/><circle cx="4" cy="9.500" r="3.500" fill="#c4c4c4"/><path d="M7 5 11 8H7Z" fill="#c4c4c4"/></svg>
<svg style="left:879px;top:480px" width="12" height="12" viewBox="0 0 12 12"><path d="M6 .5H11.500V6L5.500 11.500.5 6.500Z" fill="#c4c4c4"/><circle cx="9" cy="3" r="1" fill="#3c3c3c"/></svg>
<svg style="left:902px;top:480px" width="12" height="12" viewBox="0 0 12 12"><path d="M6 0 7.800 4 12 4.500 9 7.300 9.800 11.500 6 9.400 2.200 11.500 3 7.300 0 4.500 4.200 4Z" fill="#9a9a9a"/></svg>
<svg style="left:924px;top:480px" width="14" height="12" viewBox="0 0 14 12"><path d="M1 6Q7 1 13 6 7 11 1 6Z" fill="none" stroke="#bbb" stroke-width="1.100"/><circle cx="7" cy="6" r="2" fill="#bbb"/><path d="M3 11 11 1" stroke="#bbb" stroke-width="1.100"/></svg>
<div class="t" style="left:938px;top:478px;letter-spacing:0">6</div>
<div class="tr" style="left:16px;top:494px;border-left-color:#666"></div><div class="fold" style="left:27px;top:495px"></div><div class="t" style="left:41px;top:490px;letter-spacing:.3px">2D Casual UI</div>
<div class="fold" style="left:27px;top:509px"></div><div class="t" style="left:41px;top:504px;letter-spacing:.3px">Animation</div>
<div class="tr" style="left:16px;top:522px;border-left-color:#666"></div><div class="fold" style="left:27px;top:523px"></div><div class="t" style="left:41px;top:518px;letter-spacing:.3px">F1Car</div>
<div class="fold" style="left:27px;top:537px"></div><div class="t" style="left:41px;top:532px;letter-spacing:.3px">Image</div>
<div class="fold" style="left:27px;top:551px"></div><div class="t" style="left:41px;top:546px;letter-spacing:.3px">Palette</div>
<div class="fold" style="left:27px;top:565px"></div><div class="t" style="left:41px;top:560px;letter-spacing:.3px">Scenes</div>
<div class="b" style="left:0;top:575px;width:170px;height:14px;background:#4a4a4a"></div>
<div class="fold" style="left:27px;top:579px"></div><div class="t" style="left:41px;top:574px;letter-spacing:.3px">Script</div>
<div class="tr" style="left:16px;top:592px;border-left-color:#666"></div><div class="fold" style="left:27px;top:593px"></div><div class="t" style="left:41px;top:588px;letter-spacing:.1px">Simple 2D Platformer BE</div>
<div class="tr" style="left:3px;top:606px;border-left-color:#666"></div><div class="fold" style="left:14px;top:607px"></div><div class="t" style="left:29px;top:601px;font-weight:bold;letter-spacing:.3px">Packages</div>
<div class="b" style="left:0;top:614px;width:949px;height:18px;background:#191919"></div>
<div class="b" style="left:171px;top:530px;width:9px;height:68px;background:#5a5a5a;border-radius:5px"></div>
<div class="tri" style="left:172px;top:500px;border-top:0;border-bottom:5px solid #c4c4c4;border-left-width:3.500px;border-right-width:3.500px"></div>
<div class="tri" style="left:172px;top:605px;border-top:5px solid #c4c4c4;border-left-width:3.500px;border-right-width:3.500px"></div>
<div class="t" style="left:184px;top:496px;color:#aaa;letter-spacing:.3px">Assets</div>
<svg style="left:224px;top:500px" width="6" height="9" viewBox="0 0 6 9"><path d="M1 1 5 4.500 1 8" fill="none" stroke="#aaa"/></svg>
<div class="t" style="left:234px;top:496px;font-weight:bold;letter-spacing:.3px">Script</div>
<div class="doc" style="left:202px"><span>#</span></div><div class="lb" style="left:187px">MoveOnLi···</div>
<div class="doc" style="left:269px"><span>#</span></div><div class="lb" style="left:254px">Player</div>
<div class="doc" style="left:336px"><span>#</span></div><div class="lb" style="left:322px">PlayerWalk</div>
<div class="doc" style="left:404px"><span>#</span></div><div class="lb" style="left:389px">PointChan···</div>
<div class="doc" style="left:471px"><span>#</span></div><div class="lb" style="left:457px">RightObjM···</div>
<div class="doc" style="left:538px"><span>#</span></div><div class="lb" style="left:524px">Roulette</div>
<div class="doc" style="left:606px"><span>#</span></div><div class="lb" style="left:591px">Slime</div>
<div class="doc" style="left:672px"><span>#</span></div><div class="lb" style="left:658px">Sound</div>
<div class="doc" style="left:740px"><span>#</span></div><div class="lb" style="left:726px">UfoCntrl</div>
<div class="doc" style="left:807px"><span>#</span></div><div class="lb" style="left:793px">WalkMap</div>
<div class="doc" style="left:874px"><span>#</span></div><div class="lb" style="left:861px">Witch</div>
<div class="b" style="left:939px;top:547px;width:9px;height:35px;background:#5a5a5a;border-radius:5px"></div>
<div class="tri" style="left:940px;top:520px;border-top:0;border-bottom:5px solid #c4c4c4;border-left-width:3.500px;border-right-width:3.500px"></div>
<div class="tri" style="left:940px;top:589px;border-top:5px solid #c4c4c4;border-left-width:3.500px;border-right-width:3.500px"></div>
<div class="b" style="left:887px;top:605px;width:48px;height:1px;background:#777"></div>
<div class="b" style="left:911px;top:601px;width:9px;height:9px;background:#9a9a9a;border-radius:50%"></div>

<!-- status icons -->
<svg style="left:1110px;top:616px" width="90" height="15" viewBox="0 0 90 15">
<path d="M4 3 13 12M13 3 4 12M3 8H14" stroke="#c4c4c4" stroke-width="2"/><circle cx="8.500" cy="7.500" r="3.500" fill="#c4c4c4"/>
<ellipse cx="32" cy="3" rx="5.500" ry="2.200" fill="#c4c4c4"/><ellipse cx="32" cy="7.500" rx="5.500" ry="2.200" fill="#c4c4c4"/><ellipse cx="32" cy="12" rx="5.500" ry="2.200" fill="#c4c4c4"/>
<circle cx="55" cy="7.500" r="5" fill="none" stroke="#c4c4c4" stroke-width="1.300"/><path d="M50 1.500 61 13.500M52 1H60M52 14H60" stroke="#c4c4c4"/>
<circle cx="78" cy="7.500" r="5.800" fill="none" stroke="#c4c4c4" stroke-width="1.100"/><path d="M75.500 7.500 77.500 9.500 81 5.500" fill="none" stroke="#c4c4c4" stroke-width="1.100"/>
</svg>

<!-- red arrow -->
<svg style="left:0;top:0" width="1200" height="632" viewBox="0 0 1200 632"><path d="M847 532 982 498M965 494 984 498 974 510" fill="none" stroke="#c8202f" stroke-width="2.600" stroke-linecap="round" stroke-linejoin="round"/></svg>
</body></html>
